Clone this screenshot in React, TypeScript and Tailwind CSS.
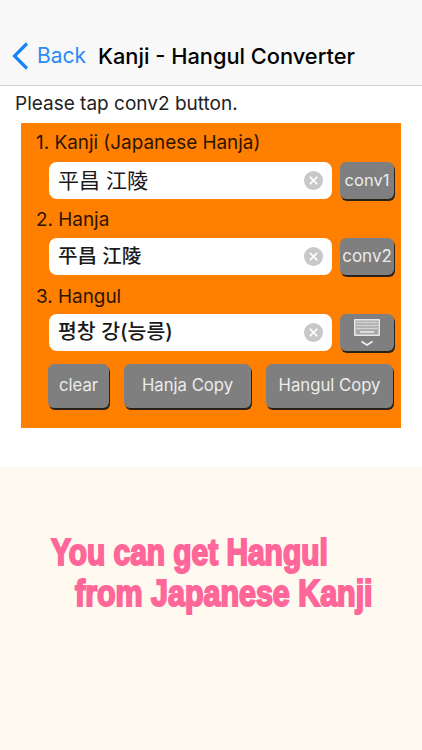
import { X } from 'lucide-react'

const fontStack = "[font-family:'Inter','Noto_Sans_CJK_KR',sans-serif]"

function Field({ value, font }: { value: string; font: string }) {
  return (
    <div className="flex h-[37px] w-[283px] items-center justify-between rounded-[8px] bg-white pr-[9px] pl-[9px]">
      <span className={`leading-none text-[#1a1a1a] ${font}`}>{value}</span>
      <span className="flex h-[19px] w-[19px] items-center justify-center rounded-full bg-[#c8c8c8]">
        <X className="h-[13px] w-[13px] text-white" strokeWidth={3.2} />
      </span>
    </div>
  )
}

function GrayButton({ className, children }: { className: string; children: React.ReactNode }) {
  return (
    <div
      className={`flex items-center justify-center rounded-[6px] bg-[#7f7f7f] text-[#ececec] shadow-[1px_2px_0_#2a2118] ${className}`}
    >
      {children}
    </div>
  )
}

function KeyboardIcon() {
  return (
    <svg width="28" height="30" viewBox="0 0 28 30" fill="none">
      <rect x="1" y="1" width="26" height="17" rx="1" fill="#e8e8e8" />
      <rect x="2.5" y="2.5" width="23" height="14" fill="#a8a8a8" />
      <path
        d="M3.5 4.5h21M3.5 7.5h21M3.5 10.5h21"
        stroke="#efefef"
        strokeWidth="1.5"
        strokeDasharray="1.2 .8"
      />
      <path d="M7 14h14" stroke="#efefef" strokeWidth="1.5" />
      <path d="M8.5 23.5l5.5 3.5 5.500-3.500" stroke="#f2f2f2" strokeWidth="1.6" />
    </svg>
  )
}

export default function App() {
  return (
    <div className={`flex h-[750px] w-[422px] flex-col bg-white ${fontStack}`}>
      {/* Nav bar */}
      <div className="flex h-[86px] items-end border-b border-[#cfcfcf] bg-[#f8f8f8] pb-[14px]">
        <svg className="mb-[1px] ml-[12px]" width="17" height="28" viewBox="0 0 17 28" fill="none">
          <path d="M15 1.5L2.5 14 15 26.5" stroke="#1a82f7" strokeWidth="3.2" />
        </svg>
        <span className="ml-[8px] w-[61px] text-[21px] leading-[30px] text-[#2b8af5]">Back</span>
        <span className="text-[21.8px] leading-[30px] font-medium whitespace-nowrap text-black">
          Kanji - Hangul Converter
        </span>
      </div>

      <p className="pt-[6px] pl-[15px] text-[19px] leading-[24px] text-[#222]">Please tap conv2 button.</p>

      {/* Converter panel */}
      <div className="mt-[7px] ml-[21px] flex h-[305px] w-[380px] flex-col bg-[#ff8000] pt-[8px] pl-[15px] text-[#2b1400]">
        <p className="h-[31px] text-[18.9px] leading-[24px]">1. Kanji (Japanese Hanja)</p>
        <div className="ml-[13px] flex gap-[8px]">
          <Field value="平昌 江陵" font="text-[21px] [font-family:'Inter','Noto_Sans_CJK_JP',sans-serif]" />
          <GrayButton className="h-[37px] w-[54px] text-[16.5px]">conv1</GrayButton>
        </div>
        <p className="mt-[9px] h-[30px] text-[18.9px] leading-[24px]">2. Hanja</p>
        <div className="ml-[13px] flex gap-[8px]">
          <Field value="平昌 江陵" font="text-[19.5px] font-medium [font-family:'Inter','Noto_Sans_CJK_KR',sans-serif]" />
          <GrayButton className="h-[37px] w-[54px] text-[17px]">conv2</GrayButton>
        </div>
        <p className="mt-[10px] h-[29px] text-[18.9px] leading-[24px]">3. Hangul</p>
        <div className="ml-[13px] flex gap-[8px]">
          <Field value="평창 강(능릉)" font="text-[20.5px] font-medium [font-family:'Inter','Noto_Sans_CJK_KR',sans-serif]" />
          <GrayButton className="h-[37px] w-[54px]">
            <KeyboardIcon />
          </GrayButton>
        </div>
        <div className="mt-[13px] ml-[12px] flex gap-[15px] text-[16.7px]">
          <GrayButton className="h-[44px] w-[61px]">clear</GrayButton>
          <GrayButton className="h-[44px] w-[127px]">Hanja Copy</GrayButton>
          <GrayButton className="h-[44px] w-[127px]">Hangul Copy</GrayButton>
        </div>
      </div>

      {/* Promo caption */}
      <div className="mt-[39px] flex-1 bg-[#fefaf0] pt-[65px] text-[36px] leading-[41px] font-bold text-[#ff6699] [-webkit-text-stroke:2px_#ff6699] [font-family:'Liberation_Sans',sans-serif]">
        <p className="ml-[51px] w-fit origin-left scale-x-[0.83] whitespace-nowrap">You can get Hangul</p>
        <p className="ml-[75px] w-fit origin-left scale-x-[0.845] whitespace-nowrap">from Japanese Kanji</p>
      </div>
    </div>
  )
}
